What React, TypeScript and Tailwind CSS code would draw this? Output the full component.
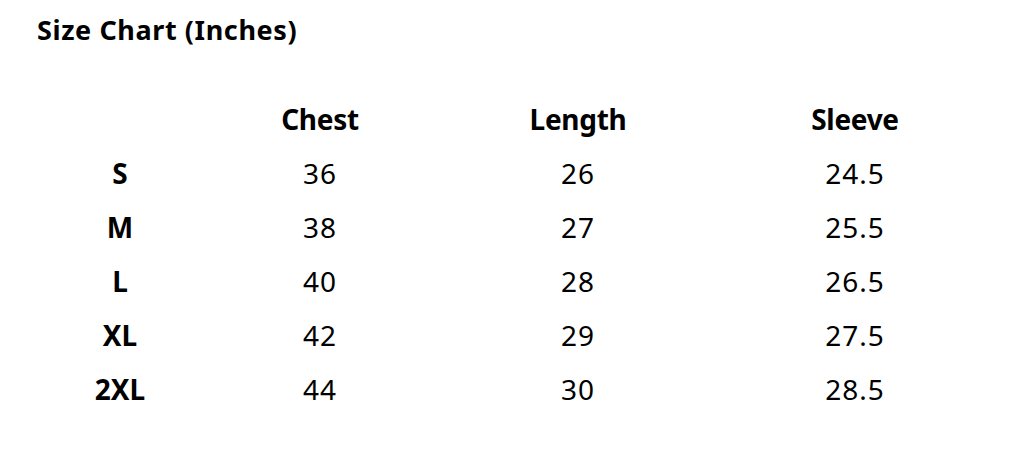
const columns = ['Chest', 'Length', 'Sleeve']

const rows = [
  { size: 'S', chest: '36', length: '26', sleeve: '24.5' },
  { size: 'M', chest: '38', length: '27', sleeve: '25.5' },
  { size: 'L', chest: '40', length: '28', sleeve: '26.5' },
  { size: 'XL', chest: '42', length: '29', sleeve: '27.5' },
  { size: '2XL', chest: '44', length: '30', sleeve: '28.5' },
]

export default function App() {
  return (
    <div
      className="w-[1024px] h-[475px] bg-white text-black"
      style={{ fontFamily: '"Noto Sans", "Open Sans", sans-serif' }}
    >
      <h1 className="pl-[37px] pt-[12px] text-[27px] leading-[36px] font-bold tracking-[0.6px]">
        Size Chart (Inches)
      </h1>

      <div className="mt-[44px] ml-[40px] grid grid-cols-[160px_240px_276px_278px] auto-rows-[54px] text-[28px]">
        <div />
        {columns.map(c => (
          <div key={c} className="flex items-center justify-center font-bold tracking-[-0.3px]">
            {c}
          </div>
        ))}

        {rows.map(r => (
          <div key={r.size} className="contents">
            <div className="flex items-center justify-center font-bold">{r.size}</div>
            <div className="flex items-center justify-center tracking-[1px]">{r.chest}</div>
            <div className="flex items-center justify-center tracking-[1px]">{r.length}</div>
            <div className="flex items-center justify-center tracking-[1px]">{r.sleeve}</div>
          </div>
        ))}
      </div>
    </div>
  )
}
